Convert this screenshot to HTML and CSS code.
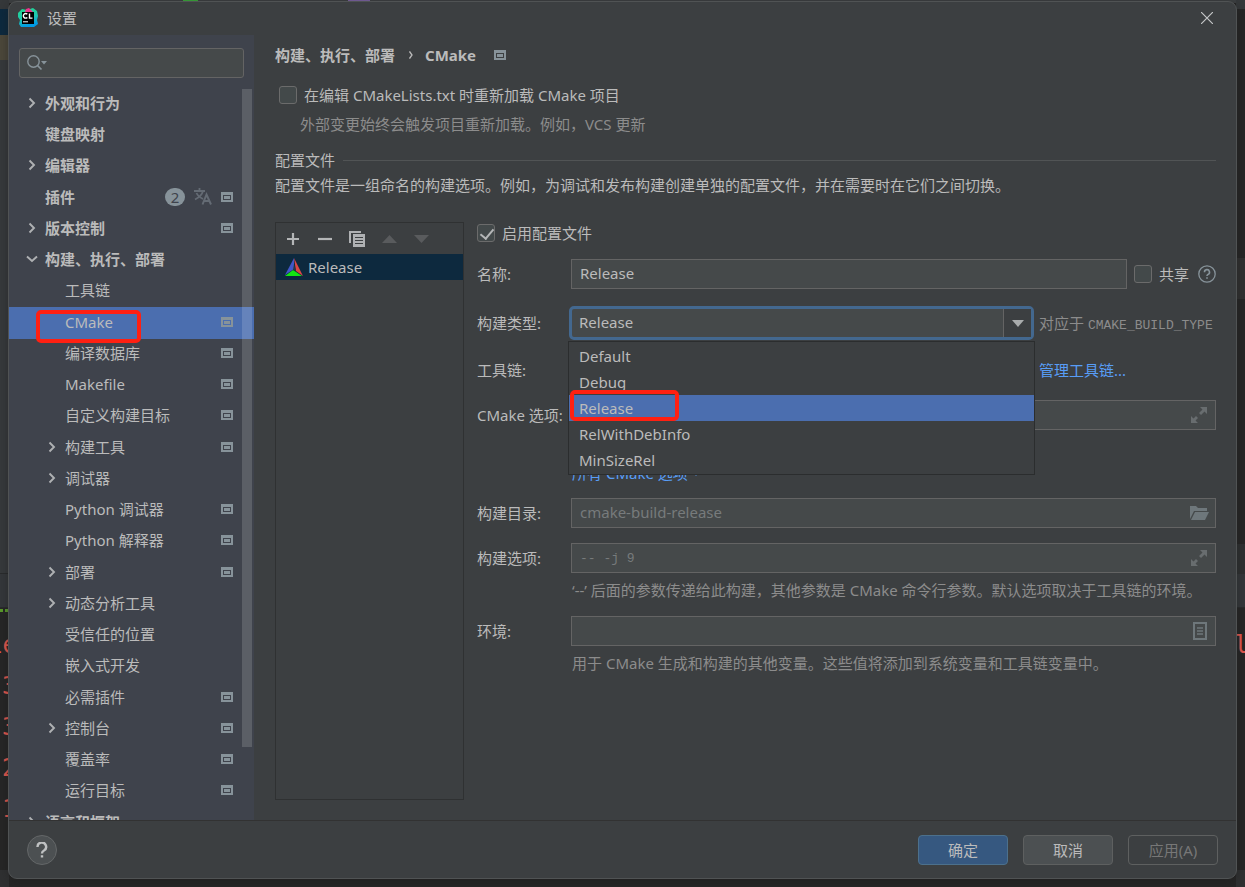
FILE: index.html
```
<!DOCTYPE html>
<html lang="zh-CN">
<head>
<meta charset="utf-8">
<title>设置</title>
<link rel="stylesheet" href="styles.css">
</head>
<body>
<svg class="sprite" aria-hidden="true">
  <symbol id="project" viewBox="0 0 12 10"><path fill="#87939a" fill-rule="evenodd" d="M0 0h12v10H0zM2 3v5h8V3z"/><path fill="#87939a" d="M3 4h6v3H3z"/></symbol>
  <symbol id="right" viewBox="0 0 8 12"><path d="M1.500 1.500 6 6l-4.500 4.500" fill="none" stroke="#afb1b3" stroke-width="1.900"/></symbol>
  <symbol id="down" viewBox="0 0 12 8"><path d="M1 1.500 6 6l5-4.500" fill="none" stroke="#afb1b3" stroke-width="1.900"/></symbol>
  <symbol id="expand" viewBox="0 0 16 16"><path d="M9 0h7v7l-2.500-2.500-3.500 3.500L8 6l3.500-3.500zM0 9l2.500 2.500L5 9l2 2-2.500 2.500L7 16H0z" fill="#686d6f"/></symbol>
</svg>

<div class="editor" aria-hidden="true">
  <div class="gutter">
    <i class="g-top"></i><i class="g-blue"></i><i class="g-brown"></i><i class="g-side"></i><i class="g-tab"></i>
    <div class="console">
      <i class="squiggle"></i>
      <span class="long">ie</span><span>3</span><span>3</span><span>2</span><span>1</span>
    </div>
    <i class="g-status"></i>
  </div>
  <div class="gutter end">
    <i class="g-top"></i><i class="e-a"></i><i class="e-b"></i><i class="e-c"></i><i class="g-tab"></i>
    <div class="console"><span>l</span></div>
    <i class="g-status"></i>
  </div>
</div>

<main class="dialog">
  <header class="titlebar">
    <svg class="logo" viewBox="0 0 20 20">
      <defs><linearGradient id="cl" x1="0" y1="0" x2="0.300" y2="1"><stop offset="0" stop-color="#21d789"/><stop offset=".6" stop-color="#1fc8b0"/><stop offset="1" stop-color="#009ae5"/></linearGradient></defs>
      <path fill="url(#cl)" d="M0 5 4 1l5 1 6-2 4 3 1 5-1 4 1 4-4 3H3l-2-3 1-4-2-3z"/>
      <path fill="#ed358c" d="m8 1 3-1 4 4H7z"/>
      <path d="M4 4h12v12H4z"/>
      <path d="M9.300 6.200a2.300 2.300 0 1 0 0 3.200M11.500 5.500v4.600h3" fill="none" stroke="#fff" stroke-width="1.400"/>
      <path d="M5 13.300h5v1H5z" fill="#fff"/>
    </svg>
    <h1>设置</h1>
    <button class="close" aria-label="关闭"><svg viewBox="0 0 12 12"><path d="m0 0 12 12M12 0 0 12" stroke="#c4c6c7" stroke-width="1.200"/></svg></button>
  </header>

  <div class="body">
    <aside class="sidebar">
      <label class="search">
        <svg viewBox="0 0 20 16"><circle cx="6.500" cy="6.500" r="5.700" fill="none" stroke="#87939a" stroke-width="1.400"/><path d="m10.500 10.500 4 4" stroke="#87939a" stroke-width="1.700"/><path d="M14 6h6l-3 3.500z" fill="#87939a"/></svg>
        <input type="text" aria-label="搜索">
      </label>
      <nav class="tree">
        <ul>
          <li class="top"><svg class="arrow"><use href="#right"/></svg><span>外观和行为</span></li>
          <li class="top"><span>键盘映射</span></li>
          <li class="top"><svg class="arrow"><use href="#right"/></svg><span>编辑器</span></li>
          <li class="top"><span>插件</span><b class="count">2</b>
            <svg class="lang" viewBox="0 0 18 17"><path d="M0 3h11M5.500 0v3M9 3C8 7 4 10 1 11.500M2.500 5C4 8.500 7 10 9 11" fill="none" stroke="#646b74" stroke-width="1.800"/><path d="m8.500 16.500 4-10 4.500 10M10 13h5.500" fill="none" stroke="#646b74" stroke-width="2"/></svg>
            <svg class="proj"><use href="#project"/></svg></li>
          <li class="top"><svg class="arrow"><use href="#right"/></svg><span>版本控制</span><svg class="proj"><use href="#project"/></svg></li>
          <li class="top"><svg class="arrow wide"><use href="#down"/></svg><span>构建、执行、部署</span></li>
          <li><span>工具链</span></li>
          <li class="selected"><span>CMake</span><svg class="proj"><use href="#project"/></svg><i class="mark"></i></li>
          <li><span>编译数据库</span><svg class="proj"><use href="#project"/></svg></li>
          <li><span>Makefile</span><svg class="proj"><use href="#project"/></svg></li>
          <li><span>自定义构建目标</span><svg class="proj"><use href="#project"/></svg></li>
          <li><svg class="arrow"><use href="#right"/></svg><span>构建工具</span><svg class="proj"><use href="#project"/></svg></li>
          <li><svg class="arrow"><use href="#right"/></svg><span>调试器</span></li>
          <li><span>Python 调试器</span><svg class="proj"><use href="#project"/></svg></li>
          <li><span>Python 解释器</span><svg class="proj"><use href="#project"/></svg></li>
          <li><svg class="arrow"><use href="#right"/></svg><span>部署</span><svg class="proj"><use href="#project"/></svg></li>
          <li><svg class="arrow"><use href="#right"/></svg><span>动态分析工具</span></li>
          <li><span>受信任的位置</span></li>
          <li><span>嵌入式开发</span></li>
          <li><span>必需插件</span><svg class="proj"><use href="#project"/></svg></li>
          <li><svg class="arrow"><use href="#right"/></svg><span>控制台</span><svg class="proj"><use href="#project"/></svg></li>
          <li><span>覆盖率</span><svg class="proj"><use href="#project"/></svg></li>
          <li><span>运行目标</span><svg class="proj"><use href="#project"/></svg></li>
          <li class="top"><svg class="arrow"><use href="#right"/></svg><span>语言和框架</span></li>
        </ul>
        <i class="thumb"></i>
      </nav>
    </aside>

    <section class="content">
      <h2 class="crumbs"><span>构建、执行、部署</span><svg class="sep" viewBox="0 0 4 8"><path d="m.5.500 2.500 3.500L.500 7.500" fill="none" stroke="#bbb" stroke-width="1.300"/></svg><span>CMake</span><svg class="proj"><use href="#project"/></svg></h2>
      <label class="check reload"><input type="checkbox"><span>在编辑 CMakeLists.txt 时重新加载 CMake 项目</span></label>
      <p class="hint reload-hint">外部变更始终会触发项目重新加载。例如，VCS 更新</p>
      <h3 class="section">配置文件</h3>
      <p class="desc">配置文件是一组命名的构建选项。例如，为调试和发布构建创建单独的配置文件，并在需要时在它们之间切换。</p>

      <div class="profiles">
        <div class="list">
          <div class="tools">
            <button aria-label="添加"><svg viewBox="0 0 18 18"><path d="M9 3v12M3 9h12" stroke="#b4b6b7" stroke-width="2.200"/></svg></button>
            <button aria-label="移除"><svg viewBox="0 0 18 18"><path d="M2 9h14" stroke="#b4b6b7" stroke-width="2.200"/></svg></button>
            <button aria-label="复制"><svg viewBox="0 0 18 18"><path d="M1 1h12v2H3v10H1z" fill="#afb1b3"/><path d="M5 4h12v13H5zM7 7v1h8V7zm0 3v1h8v-1zm0 3v1h8v-1z" fill="#afb1b3" fill-rule="evenodd"/></svg></button>
            <button aria-label="上移" disabled><svg viewBox="0 0 18 18"><path d="M2 13h15L9.500 5z" fill="#595b5d"/></svg></button>
            <button aria-label="下移" disabled><svg viewBox="0 0 18 18"><path d="M2 5h15l-7.500 8z" fill="#595b5d"/></svg></button>
          </div>
          <div class="profile"><svg viewBox="0 0 18 18"><path d="M9 0 0 17l9-6z" fill="#4257c9"/><path d="m9 0 9 18-7-5z" fill="#dc4646"/><path d="m0 18 8-6 9 6z" fill="#13e513"/><path d="m9 6 2 7-3-1z" fill="#2c3846"/></svg>Release</div>
        </div>

        <form class="form">
          <label class="check enable"><input type="checkbox" checked><span>启用配置文件</span></label>

          <div class="row">
            <label for="name">名称:</label>
            <div class="field"><input class="text" id="name" type="text" value="Release">
              <label class="check share"><input type="checkbox"><span>共享</span></label>
              <svg class="help-ring" viewBox="0 0 18 18"><circle cx="9" cy="9" r="8.200" fill="none" stroke="#87939a" stroke-width="1.300"/><path d="M6.500 7.200a2.500 2.500 0 1 1 3.500 2.200q-1 .5-1 1.600M9 12.200v1.600" fill="none" stroke="#87939a" stroke-width="1.600"/></svg>
            </div>
          </div>

          <div class="row type">
            <label for="type">构建类型:</label>
            <div class="field">
              <div class="combo">
                <select id="type"><option>Release</option></select>
                <span class="drop"><svg viewBox="0 0 12 7"><path d="M0 0h12L6 7z" fill="#a9acad"/></svg></span>
                <ul class="popup" role="listbox">
                  <li role="option">Default</li>
                  <li role="option">Debug</li>
                  <li role="option" class="active" aria-selected="true">Release<i class="mark"></i></li>
                  <li role="option">RelWithDebInfo</li>
                  <li role="option">MinSizeRel</li>
                </ul>
              </div>
              <span class="aside">对应于 <code>CMAKE_BUILD_TYPE</code></span>
            </div>
          </div>

          <div class="row">
            <span>工具链:</span>
            <div class="field"><a class="aside" href="#">管理工具链...</a></div>
          </div>

          <div class="row">
            <label for="options">CMake 选项:</label>
            <div class="field boxed"><input class="text" id="options" type="text"><svg class="inner"><use href="#expand"/></svg></div>
          </div>

          <p class="note link"><a href="#">所有 CMake 选项</a> <svg viewBox="0 0 8 6"><path d="M0 0h8L4 6z" fill="#589df6"/></svg></p>

          <div class="row">
            <label for="dir">构建目录:</label>
            <div class="field boxed"><input class="text" id="dir" type="text" placeholder="cmake-build-release"><svg class="inner folder" viewBox="0 0 19 14"><path d="M0 13V0h6l2 2h9v3H4z" fill="#6e777b"/><path d="M5 6h14l-4 8H1z" fill="#6e777b"/></svg></div>
          </div>
          <div class="row">
            <label for="build">构建选项:</label>
            <div class="field boxed"><input class="text mono" id="build" type="text" placeholder="-- -j 9"><svg class="inner"><use href="#expand"/></svg></div>
          </div>
          <p class="note hint">‘--’ 后面的参数传递给此构建，其他参数是 CMake 命令行参数。默认选项取决于工具链的环境。</p>
          <div class="row">
            <label for="env">环境:</label>
            <div class="field boxed"><input class="text" id="env" type="text"><svg class="inner doc" viewBox="0 0 14 18"><path d="M0 0h14v18H0zM2 2v14h10V2z" fill="#6e777b" fill-rule="evenodd"/><path d="M4 6h6M4 9h6M4 12h6" stroke="#6e777b" stroke-width="1.300"/></svg></div>
          </div>
          <p class="note hint">用于 CMake 生成和构建的其他变量。这些值将添加到系统变量和工具链变量中。</p>
        </form>
      </div>
    </section>
  </div>

  <footer class="footer">
    <button class="help" aria-label="帮助"><svg viewBox="0 0 12 16"><path d="M1.500 5a4.300 4.300 0 1 1 6.500 3.500Q6 9.500 6 11.500M6 13.200v2.300" fill="none" stroke="#bfc1c2" stroke-width="2.400"/></svg></button>
    <button class="btn primary">确定</button>
    <button class="btn">取消</button>
    <button class="btn" disabled>应用(A)</button>
  </footer>
</main>
</body>
</html>
```
FILE: styles.css
```
* { box-sizing: border-box; }
body {
  margin: 0;
  min-height: 100vh;
  display: flex;
  padding: 1px 8px 8px;
  background: #262626;
  color: #bbb;
  font: 15px/20px "Noto Sans", "Noto Sans CJK SC", sans-serif;
}
h1, h2, h3, p, ul { margin: 0; padding: 0; font-size: 15px; font-weight: 400; }
ul { list-style: none; }
i { display: block; }
svg { flex: none; display: block; }
button, input, select { font: inherit; color: inherit; margin: 0; }
button { border: 0; padding: 0; background: none; }
a { color: #589df6; text-decoration: none; }
.sprite { position: absolute; width: 0; height: 0; }

/* editor window behind the dialog */
.editor {
  position: absolute;
  inset: 0;
  display: flex;
  justify-content: space-between;
  overflow: hidden;
  background: linear-gradient(90deg, #3c3f41 183px, #3aa63a 183px 198px, #3c3f41 198px 348px, #7a62a0 348px 370px, #3c3f41 370px) 0 0 / 100% 3px no-repeat;
}
.gutter { width: 9px; display: flex; flex-direction: column; }
.g-top { height: 9px; background: #35383a; }
.g-blue { height: 26px; background: #0d293e; }
.g-brown { height: 25px; background: #4b473a; }
.g-side { height: 514px; background: #36393b; border-bottom: 1px solid #292b2c; }
.g-tab { height: 34px; background: #34373a; border-bottom: 1px solid #292b2c; }
.e-a { height: 249px; background: #262626; }
.e-b { height: 41px; background: #303030; }
.e-c { height: 275px; border-bottom: 30px solid #2e3031; }
.console {
  position: relative;
  flex: 1;
  overflow: hidden;
  padding-top: 17px;
  color: #e0584f;
  font: 24px/41px "DejaVu Sans Mono", monospace;
}
.console span { display: block; width: 30px; margin-left: 2px; }
.console .long { margin-left: -12px; }
.end .console span { margin-left: -2px; }
.squiggle { position: absolute; top: 1px; left: 0; width: 9px; height: 3px; background: repeating-linear-gradient(90deg, #5a9a2c 0 3px, transparent 3px 5px); }
.g-status { height: 17px; background: #2f3031; }

.dialog {
  position: relative;
  flex: 1;
  min-width: 0;
  display: flex;
  flex-direction: column;
  background: #3c3f41;
  border: 1px solid #505354;
  border-radius: 9px;
  box-shadow: 0 2px 8px rgba(26, 26, 26, .4);
}
.titlebar { height: 33px; display: flex; align-items: center; padding: 0 23px 2px 9px; }
.logo { width: 20px; height: 20px; margin-right: 9px; }
.close { margin-left: auto; }
.close svg { width: 12px; height: 12px; }

.body { flex: 1 1 0; min-height: 0; display: flex; }
.sidebar { width: 245px; flex: none; display: flex; flex-direction: column; background: #3f434c; padding-top: 13px; }
.search {
  flex: none;
  display: flex;
  align-items: center;
  gap: 4px;
  height: 30px;
  margin: 0 10px 11px;
  padding: 0 7px;
  background: #45494a;
  border: 1px solid #646464;
  border-radius: 3px;
}
.search svg { width: 20px; height: 16px; }
.search input { flex: 1; min-width: 0; border: 0; background: none; outline: 0; }
.tree { position: relative; flex: 1 1 0; min-height: 0; overflow: hidden; }
.tree li { position: relative; display: flex; align-items: center; height: 31px; padding: 0 21px 3px 56px; }
.tree li:nth-child(4n) { height: 32px; }
.tree li.top { padding-left: 36px; font-weight: 700; }
.tree .selected { background: #4b6eaf; }
.arrow { width: 8px; height: 12px; margin: 0 9px 0 -17px; }
.arrow.wide { width: 12px; height: 8px; margin-left: -19px; margin-right: 7px; }
.proj { width: 12px; height: 10px; }
.tree .proj { margin-left: auto; }
.count {
  width: 20px;
  height: 18px;
  margin-left: auto;
  border-radius: 9px;
  background: #87939a;
  color: #3f434c;
  font-weight: 400;
  line-height: 18px;
  text-align: center;
}
.lang { width: 18px; height: 17px; margin: 0 9px; }
.tree .lang + .proj { margin-left: 0; }
.thumb { position: absolute; z-index: 2; top: 0; right: 2px; width: 10px; height: 90%; background: rgba(255, 255, 255, .15); }
.mark { position: absolute; border: 4px solid #ff2012; border-radius: 5px; }
.tree .selected { z-index: 1; }
.tree .mark { left: 27px; top: 3px; width: 105px; height: 33px; }

.content { flex: 1; min-width: 0; padding: 10px 20px 20px 21px; display: flex; flex-direction: column; }
.crumbs { display: flex; align-items: center; font-weight: 700; }
.crumbs .sep { width: 4px; height: 8px; margin: 0 12px 0 14px; }
.crumbs .proj { margin-left: 18px; }
.check { display: flex; align-items: center; gap: 7px; }
.check input {
  appearance: none;
  position: relative;
  flex: none;
  width: 18px;
  height: 18px;
  border: 1px solid #6b6b6b;
  border-radius: 3px;
  background: #43494a;
}
.check input:checked::after {
  content: "";
  position: absolute;
  left: 5px;
  top: 1px;
  width: 6px;
  height: 11px;
  border: solid #b5b7b8;
  border-width: 0 2px 2px 0;
  transform: rotate(40deg);
}
.reload { margin: 20px 0 0 4px; }
.reload-hint { margin: 9px 0 0 25px; }
.hint { color: #8c8c8c; }
.section { display: flex; align-items: center; gap: 8px; margin-top: 16px; }
.section::after { content: ""; flex: 1; height: 1px; background: #515455; }
.desc { margin-top: 5px; }

.profiles { flex: 1; display: flex; gap: 13px; margin-top: 27px; }
.list { width: 189px; flex: none; border: 1px solid #2f3132; }
.tools { display: flex; align-items: center; gap: 14px; height: 31px; padding: 0 8px; }
.tools svg { width: 18px; height: 18px; }
.profile { display: flex; align-items: center; gap: 5px; height: 26px; padding-left: 9px; background: #0d293e; }
.profile svg { width: 18px; height: 18px; }

.form { flex: 1; min-width: 0; }
.enable { margin: 1px 0 16px; }
.row { display: grid; grid-template-columns: 94px minmax(0, 1fr); align-items: center; height: 30px; margin-bottom: 15px; white-space: nowrap; }
.field { display: flex; align-items: center; height: 100%; position: relative; }
.text { flex: 1; min-width: 0; height: 30px; padding: 0 8px 2px; border: 1px solid #646464; background: #45494a; outline: 0; }
.text::placeholder { color: #777b7c; opacity: 1; }
.mono { padding-bottom: 0; font-family: "Liberation Mono", monospace; font-size: 13px; }
.share { margin-left: 7px; }
.help-ring { width: 18px; height: 18px; margin-left: 9px; }
.row.type { height: 34px; margin-top: 17px; }
.combo { position: relative; flex: 1; height: 34px; margin-left: -2px; border: 3px solid #43688f; border-radius: 5px; display: flex; background: #45494a; }
.combo select { appearance: none; flex: 1; border: 0; background: none; padding: 0 7px 2px; outline: 0; }
.drop { width: 28px; display: flex; align-items: center; justify-content: center; background: #3c3f41; border-left: 1px solid #646464; }
.drop svg { width: 12px; height: 7px; }
.aside { width: 177px; margin-left: 5px; color: #8c8c8c; }
a.aside { margin-left: auto; color: #589df6; }
.aside code { font: 13px "Liberation Mono", monospace; }
.popup {
  position: absolute;
  z-index: 2;
  top: 32px;
  left: -4px;
  right: -4px;
  padding: 1px 0;
  background: #3c3f41;
  border: 1px solid #2b2d2e;
}
.popup li { position: relative; height: 26px; padding: 3px 10px; }
.popup .active { background: #4b6eaf; }
.popup .mark { left: 1px; top: -5px; width: 109px; height: 31px; }
.inner { position: absolute; right: 9px; width: 16px; height: 16px; }
.folder { right: 7px; width: 19px; height: 14px; }
.doc { width: 14px; height: 18px; }
.note { margin: -8px 0 16px 95px; white-space: nowrap; }
.link { display: flex; align-items: center; gap: 4px; margin-top: 33px; margin-bottom: 15px; }
.link svg { width: 8px; height: 6px; }

.footer { display: flex; align-items: center; gap: 15px; height: 58px; padding: 0 18px; border-top: 1px solid #323232; }
.help { width: 30px; height: 30px; margin-right: auto; display: flex; align-items: center; justify-content: center; border: 1px solid #646768; border-radius: 50%; background: #4c5052; }
.help svg { width: 12px; height: 16px; }
.btn { width: 90px; height: 30px; border: 1px solid #5e6060; border-radius: 4px; background: #4c5052; }
.primary { background: #365880; border-color: #4c708c; }
.btn:disabled { background: none; color: #777; }
```
